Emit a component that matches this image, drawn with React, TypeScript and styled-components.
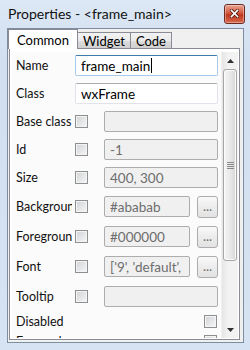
import styled, { createGlobalStyle } from "styled-components";

const GlobalStyle = createGlobalStyle`
  html, body {
    margin: 0;
    padding: 0;
    background: #d5e2f1;
  }
  body {
    font-family: Lato, "Liberation Sans", sans-serif;
    font-size: 12.5px;
    color: #000;
  }
`;

const Window = styled.div`
  width: 250px;
  height: 350px;
  box-sizing: border-box;
  display: flex;
  flex-direction: column;
  background: linear-gradient(#dde8f5, #d1dff0 60px, #d6e3f2);
  padding: 0 6px 7px 7px;
`;

const TitleBar = styled.div`
  height: 28px;
  display: flex;
  align-items: center;
  justify-content: space-between;
  padding: 0 0 1px 1px;
  box-sizing: border-box;
`;

const Title = styled.span`
  font-size: 14px;
  color: #111;
`;

const CloseButton = styled.div`
  width: 19px;
  height: 18px;
  margin-right: -1px;
  border: 1px solid #6e2a1f;
  border-radius: 3px;
  background: linear-gradient(#e8a593, #d2573c 45%, #c0391f 55%, #d66a4e);
  display: flex;
  align-items: center;
  justify-content: center;
  box-shadow: inset 0 0 0 1px rgba(255, 255, 255, 0.35);
`;

const Client = styled.div`
  flex: 1;
  border: 1px solid #7d8c9f;
  background: #f0f0f0;
  display: flex;
  flex-direction: column;
  padding: 0 3px 2px 0;
  min-height: 0;
`;

const TabStrip = styled.div`
  display: flex;
  align-items: flex-end;
  height: 20px;
  margin-bottom: -1px;
  position: relative;
  z-index: 1;
`;

const Tab = styled.div<{ $active?: boolean }>`
  box-sizing: border-box;
  height: ${(p) => (p.$active ? "20px" : "17px")};
  padding: ${(p) => (p.$active ? "0 8px" : "0 5px")};
  border: 1px solid #898c95;
  border-bottom: ${(p) => (p.$active ? "none" : "1px solid #898c95")};
  margin-left: ${(p) => (p.$active ? "0" : "-1px")};
  background: ${(p) =>
    p.$active ? "#fff" : "linear-gradient(#f2f2f2, #ebebeb 50%, #dddddd 51%, #cfcfcf)"};
  display: flex;
  align-items: center;
  font-size: 13px;
  &:first-child {
    margin-left: 0;
  }
`;

const TabPage = styled.div`
  flex: 1;
  min-height: 0;
  border: 1px solid #898c95;
  background: #fff;
  margin-left: 1px;
  padding: 3px 1px 1px 2px;
  display: flex;
`;

const Panel = styled.div`
  flex: 1;
  min-width: 0;
  overflow: hidden;
  padding: 3px 3px 0 4px;
  display: flex;
  flex-direction: column;
  gap: 7px;
  background: #fbfbfb;
`;

const Row = styled.div<{ $tall?: boolean; $short?: boolean }>`
  display: flex;
  align-items: center;
  flex-shrink: 0;
  height: ${(p) => (p.$tall ? "23px" : p.$short ? "13px" : "21px")};
`;

const Label = styled.div`
  width: 56px;
  margin-right: 3px;
  overflow: hidden;
  white-space: nowrap;
  flex-shrink: 0;
  color: #111;
`;

const Check = styled.span<{ $end?: boolean }>`
  width: 13px;
  height: 13px;
  box-sizing: border-box;
  flex-shrink: 0;
  border: 1px solid #8e8f8f;
  background: linear-gradient(135deg, #cfd2d6, #f7f7f7);
  box-shadow: inset 0 0 0 1px #f4f4f4;
  margin-left: ${(p) => (p.$end ? "auto" : "0")};
  margin-right: ${(p) => (p.$end ? "1px" : "16px")};
`;

const TextBox = styled.div<{ $focused?: boolean }>`
  flex: 1;
  height: 21px;
  box-sizing: border-box;
  border: 1px solid ${(p) => (p.$focused ? "#a9cbe9" : "#e2e3ea")};
  border-top-color: ${(p) => (p.$focused ? "#3d7bad" : "#abadb3")};
  border-radius: 2px;
  background: #fff;
  padding: 0 5px;
  display: flex;
  align-items: center;
  font-size: 13.5px;
  white-space: nowrap;
  overflow: hidden;
`;

const Caret = styled.span`
  display: inline-block;
  width: 1px;
  height: 15px;
  background: #000;
  margin-left: 1px;
`;

const ReadOnlyBox = styled.div`
  flex: 1;
  min-width: 0;
  height: 21px;
  box-sizing: border-box;
  border: 1px solid #adadad;
  border-radius: 2px;
  background: #f0f0f0;
  padding: 0 5px;
  display: flex;
  align-items: center;
  color: #6d6d6d;
  font-size: 13.5px;
  white-space: nowrap;
  overflow: hidden;
`;

const DotsButton = styled.div`
  width: 21px;
  height: 22px;
  box-sizing: border-box;
  margin-left: 7px;
  flex-shrink: 0;
  border: 1px solid #acacac;
  border-radius: 3px;
  background: linear-gradient(#f9f9f9, #ececec 50%, #e2e2e2);
  color: #6f6f6f;
  display: flex;
  align-items: flex-end;
  justify-content: center;
  padding-bottom: 4px;
  line-height: 1;
  font-size: 13px;
`;

const ScrollBar = styled.div`
  width: 16px;
  flex-shrink: 0;
  display: flex;
  flex-direction: column;
  background: linear-gradient(90deg, #e6e6e6, #f2f2f2 40%, #f2f2f2);
  border-left: 1px solid #f0f0f0;
`;

const ArrowButton = styled.div`
  height: 17px;
  display: flex;
  align-items: center;
  justify-content: center;
  flex-shrink: 0;
`;

const Track = styled.div`
  flex: 1;
  display: flex;
  flex-direction: column;
  padding: 0 0 60px 0;
`;

const Thumb = styled.div`
  flex: 1;
  margin: 0 1px 0 1px;
  border: 1px solid #a6a6a6;
  border-radius: 3px;
  background: linear-gradient(90deg, #f4f4f4, #e9e9e9 50%, #d6d6d6);
  box-shadow: inset 0 0 0 1px #fbfbfb;
  display: flex;
  align-items: center;
  justify-content: center;
`;

const Up = () => (
  <svg width="7" height="4" viewBox="0 0 7 4">
    <path d="M0 4 L3.5 0 L7 4 Z" fill="#303030" />
  </svg>
);

const Down = () => (
  <svg width="7" height="4" viewBox="0 0 7 4">
    <path d="M0 0 L3.5 4 L7 0 Z" fill="#303030" />
  </svg>
);

const Grip = () => (
  <svg width="7" height="7" viewBox="0 0 7 7">
    <path d="M0 0.5 H7 M0 2.5 H7 M0 4.5 H7 M0 6.5 H7" stroke="#8a8a8a" strokeWidth="1" />
  </svg>
);

const CloseIcon = () => (
  <svg width="9" height="9" viewBox="0 0 9 9">
    <path
      d="M1.5 1.5 L7.5 7.5 M7.5 1.5 L1.5 7.5"
      stroke="#5a1e14"
      strokeWidth="3.2"
      strokeLinecap="square"
    />
    <path
      d="M1.5 1.5 L7.5 7.5 M7.5 1.5 L1.5 7.5"
      stroke="#fff"
      strokeWidth="1.6"
      strokeLinecap="square"
    />
  </svg>
);

type Prop = { label: string; value: string; button?: boolean };

const optional: Prop[] = [
  { label: "Base class", value: "" },
  { label: "Id", value: "-1" },
  { label: "Size", value: "400, 300" },
  { label: "Background", value: "#ababab", button: true },
  { label: "Foreground", value: "#000000", button: true },
  { label: "Font", value: "['9', 'default',", button: true },
  { label: "Tooltip", value: "" },
];

const App = () => {
  return (
    <>
      <GlobalStyle />
      <Window>
        <TitleBar>
          <Title>Properties - &lt;frame_main&gt;</Title>
          <CloseButton>
            <CloseIcon />
          </CloseButton>
        </TitleBar>
        <Client>
          <TabStrip>
            <Tab $active>Common</Tab>
            <Tab>Widget</Tab>
            <Tab>Code</Tab>
          </TabStrip>
          <TabPage>
            <Panel>
              <Row>
                <Label>Name</Label>
                <TextBox $focused>
                  frame_main
                  <Caret />
                </TextBox>
              </Row>
              <Row>
                <Label>Class</Label>
                <TextBox>wxFrame</TextBox>
              </Row>
              {optional.map((p) => (
                <Row key={p.label} $tall={p.button || p.label === "Tooltip"}>
                  <Label>{p.label}</Label>
                  <Check />
                  <ReadOnlyBox>{p.value}</ReadOnlyBox>
                  {p.button && <DotsButton>...</DotsButton>}
                </Row>
              ))}
              <Row $short>
                <Label>Disabled</Label>
                <Check $end />
              </Row>
              <Row $short>
                <Label>Focused</Label>
                <Check $end />
              </Row>
            </Panel>
            <ScrollBar>
              <ArrowButton>
                <Up />
              </ArrowButton>
              <Track>
                <Thumb>
                  <Grip />
                </Thumb>
              </Track>
              <ArrowButton>
                <Down />
              </ArrowButton>
            </ScrollBar>
          </TabPage>
        </Client>
      </Window>
    </>
  );
};

export default App;
